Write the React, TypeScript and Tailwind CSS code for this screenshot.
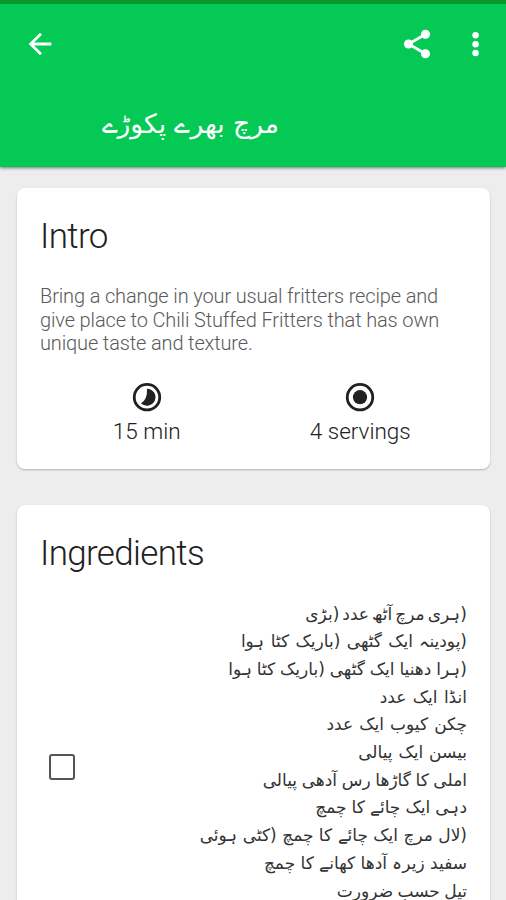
import type { ReactNode } from 'react'

const ingredients = [
  { text: '(ہری مرچ آٹھ عدد (بڑی', spacing: '[word-spacing:-2.4px]' },
  { text: '(پودینہ ایک گٹھی (باریک کٹا ہوا', spacing: '[word-spacing:1px]' },
  { text: '(ہرا دھنیا ایک گٹھی (باریک کٹا ہوا', spacing: '[word-spacing:-0.5px]' },
  { text: 'انڈا ایک عدد', spacing: '[word-spacing:1px]' },
  { text: 'چکن کیوب ایک عدد', spacing: '[word-spacing:0.7px]' },
  { text: 'بیسن ایک پیالی', spacing: '[word-spacing:0.5px]' },
  { text: 'املی کا گاڑھا رس آدھی پیالی', spacing: '[word-spacing:-0.8px]' },
  { text: 'دہی ایک چائے کا چمچ', spacing: '[word-spacing:-0.3px]' },
  { text: '(لال مرچ ایک چائے کا چمچ (کٹی ہوئی', spacing: '[word-spacing:0px]' },
  { text: 'سفید زیرہ آدھا کھانے کا چمچ', spacing: '[word-spacing:0px]' },
  { text: 'تیل حسب ضرورت', spacing: '[word-spacing:-1px]' },
]

function Icon({ d, className }: { d: string; className: string }) {
  return (
    <svg viewBox="0 0 24 24" fill="currentColor" className={className}>
      <path d={d} />
    </svg>
  )
}

function Header() {
  return (
    <header className="h-[167px] shrink-0 border-t-4 border-[#049a2b] bg-[#04c954] text-white shadow-[0_1px_3px_rgba(0,0,0,0.5)]">
      <div className="flex h-20 items-center pl-[25px] pr-[14px]">
        <button aria-label="Back">
          <Icon className="size-[34px] -ml-0.5" d="M20 11H7.83l5.59-5.59L12 4l-8 8 8 8 1.41-1.41L7.83 13H20v-2z" />
        </button>
        <button aria-label="Share" className="ml-auto">
          <svg viewBox="0 0 24 24" fill="currentColor" className="size-[34px]">
            <path d="M18 5.1 6 12l12 6.9" fill="none" stroke="currentColor" strokeWidth="2" />
            <circle cx="18" cy="5.1" r="3.2" />
            <circle cx="6" cy="12" r="3.2" />
            <circle cx="18" cy="18.9" r="3.2" />
          </svg>
        </button>
        <button aria-label="More" className="ml-6">
          <svg viewBox="0 0 24 24" fill="currentColor" className="size-[34px]">
            <circle cx="12.4" cy="5.9" r="2.3" />
            <circle cx="12.4" cy="12.1" r="2.3" />
            <circle cx="12.4" cy="18.3" r="2.3" />
          </svg>
        </button>
      </div>
      <h1 dir="rtl" className="mt-[22px] mr-[227px] whitespace-nowrap text-right font-['DejaVu_Sans',sans-serif] text-[26.5px] leading-9">
        مرچ بھرے پکوڑے
      </h1>
    </header>
  )
}

function Card({ title, children }: { title: string; children: ReactNode }) {
  return (
    <section className="rounded-lg bg-white px-[23px] shadow-[0_1px_2px_rgba(0,0,0,0.25)]">
      <h2 className="pt-7 text-[35px] font-light leading-[42px] tracking-[-0.65px] text-[#212121]">{title}</h2>
      {children}
    </section>
  )
}

export default function App() {
  return (
    <div className="flex h-[900px] w-[506px] flex-col overflow-hidden bg-[#ededed] font-[Roboto,sans-serif]">
      <Header />
      <main className="flex flex-col gap-9 pl-[17px] pr-4 pt-[21px]">
        <Card title="Intro">
          <p className="mt-[27px] whitespace-nowrap text-[20px] font-light leading-[23.5px] tracking-[-0.14px] text-[#5a5a5a]">
            Bring a change in your usual fritters recipe and
            <br />
            give place to Chili Stuffed Fritters that has own
            <br />
            unique taste and texture.
          </p>
          <div className="mt-[25px] grid grid-cols-2 pb-[24px] text-[22.5px] font-[350] leading-[27px] text-[#212121]">
            <div className="flex flex-col items-center">
              <svg viewBox="0 0 24 24" fill="currentColor" className="mb-[3px] size-[34px]">
                <circle cx="12" cy="11.4" r="9" fill="none" stroke="currentColor" strokeWidth="2" />
                <path d="M12 5.4a6 6 0 1 1-4.24 10.24Q12.4 13 12 5.4z" />
              </svg>
              15 min
            </div>
            <div className="flex flex-col items-center">
              <svg viewBox="0 0 24 24" fill="currentColor" className="mb-[3px] size-[34px]">
                <circle cx="12" cy="11.4" r="9" fill="none" stroke="currentColor" strokeWidth="2" />
                <circle cx="12" cy="11.4" r="5" />
              </svg>
              4 servings
            </div>
          </div>
        </Card>
        <Card title="Ingredients">
          <div className="mt-[26px] flex items-center">
            <div role="checkbox" aria-checked="false" className="ml-[9px] mt-1 size-[26px] rounded-[3px] border-[2.5px] border-[#555]" />
            <ul dir="rtl" className="ml-auto whitespace-nowrap pb-6 font-['DejaVu_Sans',sans-serif] text-[17px] leading-[27.7px] text-[#333]">
              {ingredients.map((item) => (
                <li key={item.text} className={item.spacing}>
                  {item.text}
                </li>
              ))}
            </ul>
          </div>
        </Card>
      </main>
    </div>
  )
}
